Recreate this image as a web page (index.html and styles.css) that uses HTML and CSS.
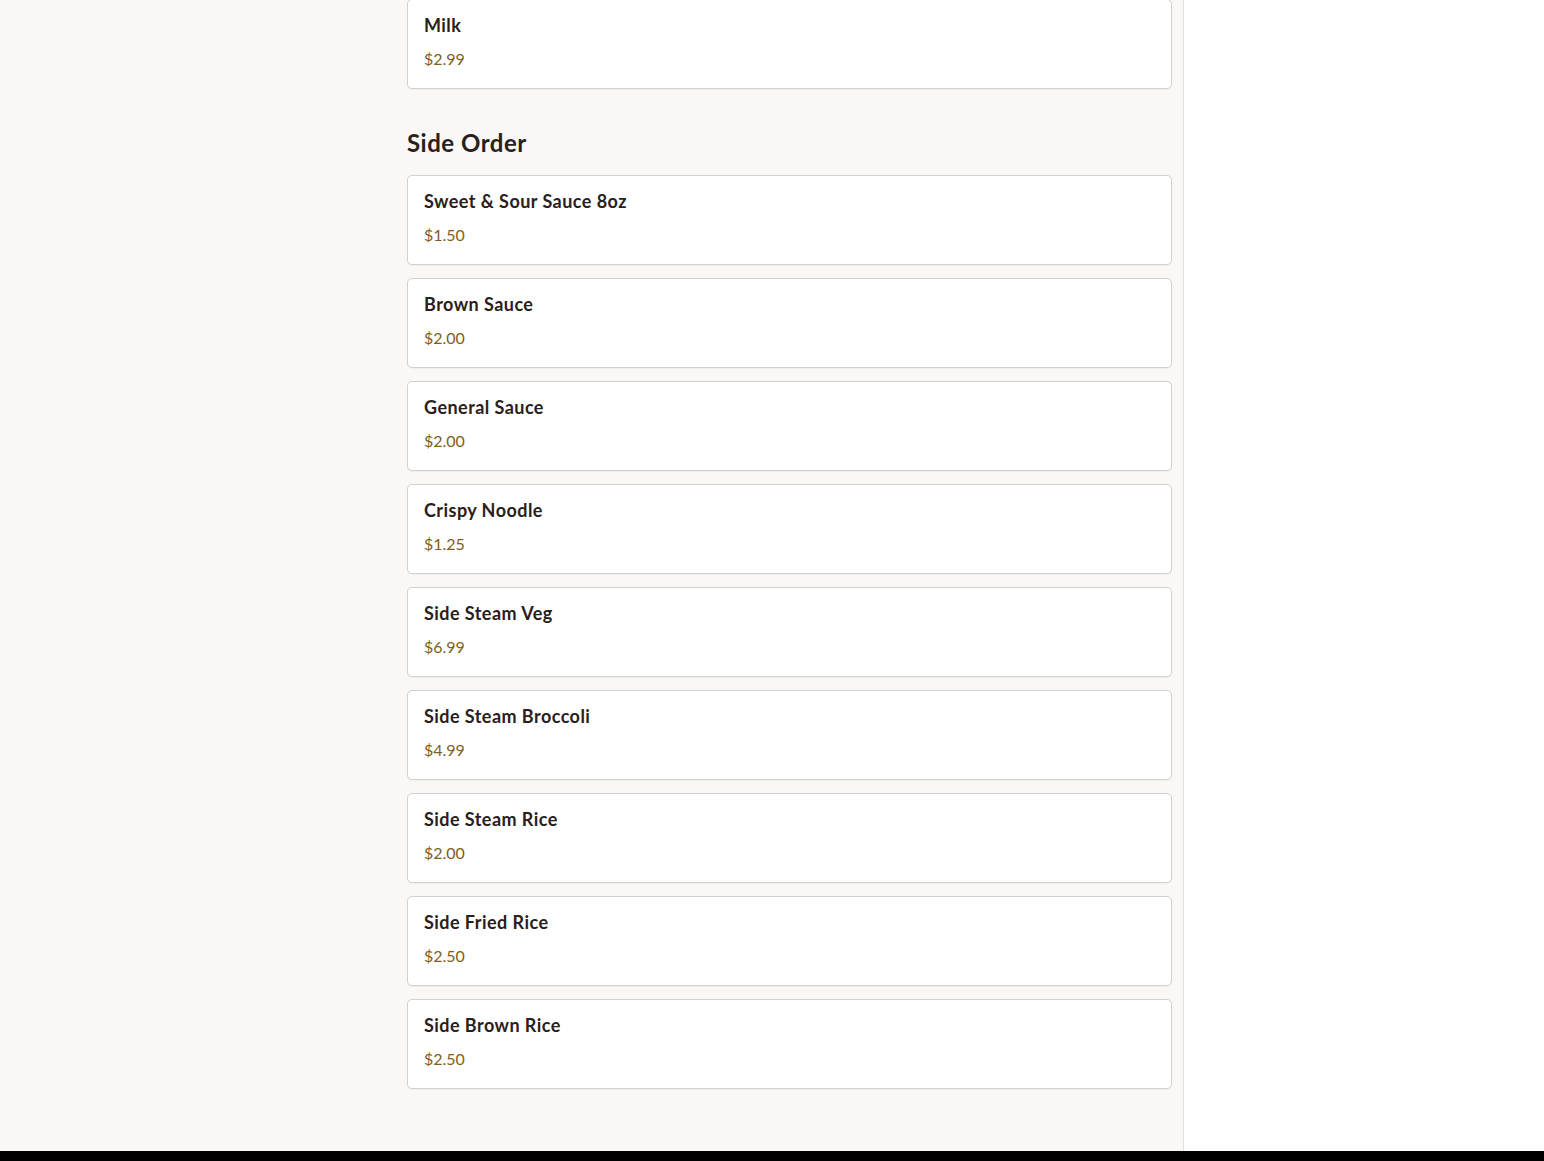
FILE: index.html
```html
<!DOCTYPE html>
<html lang="en">
<head>
<meta charset="utf-8">
<title>Menu</title>
<link rel="stylesheet" href="styles.css">
</head>
<body>
<div class="layout">
  <div class="gutter"></div>
  <main class="menu">
    <ul class="items">
      <li class="item first"><div class="name">Milk</div><div class="price">$2.99</div></li>
    </ul>
    <section class="category">
      <h2 class="cat-title">Side Order</h2>
      <ul class="items">
        <li class="item"><div class="name">Sweet &amp; Sour Sauce 8oz</div><div class="price">$1.50</div></li>
        <li class="item"><div class="name">Brown Sauce</div><div class="price">$2.00</div></li>
        <li class="item"><div class="name">General Sauce</div><div class="price">$2.00</div></li>
        <li class="item"><div class="name">Crispy Noodle</div><div class="price">$1.25</div></li>
        <li class="item"><div class="name">Side Steam Veg</div><div class="price">$6.99</div></li>
        <li class="item"><div class="name">Side Steam Broccoli</div><div class="price">$4.99</div></li>
        <li class="item"><div class="name">Side Steam Rice</div><div class="price">$2.00</div></li>
        <li class="item"><div class="name">Side Fried Rice</div><div class="price">$2.50</div></li>
        <li class="item"><div class="name">Side Brown Rice</div><div class="price">$2.50</div></li>
      </ul>
    </section>
  </main>
  <aside class="cart"></aside>
</div>
<footer class="footer"></footer>
</body>
</html>
```
FILE: styles.css
```css
* { box-sizing: border-box; }
html, body { margin: 0; padding: 0; }
body {
  background: #f9f8f6;
  font-family: Lato, "Noto Sans", "Liberation Sans", sans-serif;
  color: #2a201b;
}
.layout {
  display: grid;
  grid-template-columns: 395px 789px 1fr;
}
.menu {
  padding: 0 11px 62px 12px;
  border-right: 1px solid #e4e1dd;
}
.cart { background: #ffffff; }
.items {
  list-style: none;
  margin: 0;
  padding: 0;
  display: flex;
  flex-direction: column;
  gap: 13px;
}
.item {
  background: #ffffff;
  border: 1px solid #d4d0cc;
  border-radius: 5px;
  padding: 14px 16px 18px;
  box-shadow: 0 1px 1px rgba(0,0,0,0.04);
}
.item.first { margin-top: -1px; }
.name {
  font-size: 18px;
  font-weight: 700;
  line-height: 22px;
  letter-spacing: 0.45px;
  color: #2a201b;
}
.price {
  margin-top: 12px;
  font-size: 16px;
  line-height: 22px;
  color: #7d5f22;
}
.cat-title {
  margin: 38px 0 16px;
  font-size: 24px;
  line-height: 32px;
  font-weight: 700;
  letter-spacing: 0.5px;
  color: #2a201b;
}
.footer {
  height: 60px;
  background: #000000;
}
```
